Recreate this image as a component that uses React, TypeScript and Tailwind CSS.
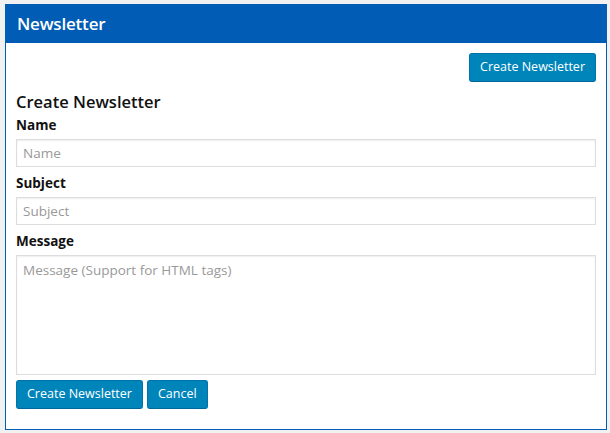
export default function App() {
  const btn =
    "h-[29px] px-[10px] rounded-[3px] bg-[#0085ba] border border-[#0073aa] border-b-[#006799] text-white text-[12.5px]";
  const field =
    "block w-full border border-[#dddddd] px-[6px] text-[13.5px] placeholder:text-[#999] outline-none shadow-[inset_0_1px_2px_rgba(0,0,0,0.07)]";
  return (
    <div
      className="min-h-[433px] bg-[#f1f1f1] pt-[4px] pl-[5px] pr-[3px] pb-[2px]"
      style={{ fontFamily: '"Open Sans", "Noto Sans", sans-serif' }}
    >
      <div className="border border-[#005cb5] bg-white">
        <div className="h-[38px] bg-[#005cb5] px-[11px] flex items-center">
          <h1 className="text-[17px] font-semibold text-white tracking-[-0.2px]">Newsletter</h1>
        </div>
        <div className="px-[10px] pt-[10px] pb-[20px]">
          <div className="flex justify-end">
            <button className={btn}>Create Newsletter</button>
          </div>
          <h2 className="mt-[9px] text-[16.5px] font-semibold text-[#111] leading-[22px]">Create Newsletter</h2>
          <label className="block mt-[2px] text-[13.5px] font-bold text-[#111] leading-[20px]">Name</label>
          <input className={`mt-[4px] h-[28px] ${field}`} placeholder="Name" />
          <label className="block mt-[6px] text-[13.5px] font-bold text-[#111] leading-[20px]">Subject</label>
          <input className={`mt-[4px] h-[28px] ${field}`} placeholder="Subject" />
          <label className="block mt-[6px] text-[13.5px] font-bold text-[#111] leading-[20px]">Message</label>
          <textarea
            className={`mt-[4px] h-[120px] py-[4px] resize-none ${field}`}
            placeholder="Message (Support for HTML tags)"
          />
          <div className="mt-[5px] flex gap-[4px]">
            <button className={btn}>Create Newsletter</button>
            <button className={btn}>Cancel</button>
          </div>
        </div>
      </div>
    </div>
  );
}
